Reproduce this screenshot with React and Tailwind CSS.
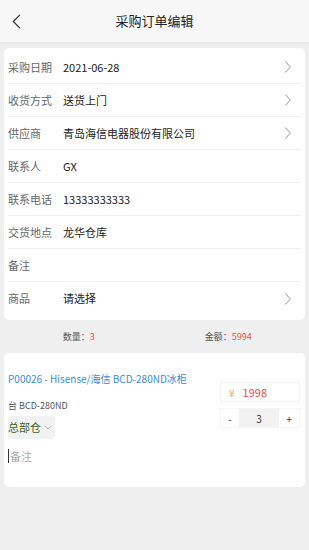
import React from 'react';

const rows = [
  { label: '采购日期', value: '2021-06-28', arrow: true },
  { label: '收货方式', value: '送货上门', arrow: true },
  { label: '供应商', value: '青岛海信电器股份有限公司', arrow: true },
  { label: '联系人', value: 'GX' },
  { label: '联系电话', value: '13333333333' },
  { label: '交货地点', value: '龙华仓库' },
  { label: '备注', value: '' },
  { label: '商品', value: '请选择', arrow: true },
];

function Chevron({ className = '' }) {
  return (
    <svg viewBox="0 0 10 16" className={className} fill="none" stroke="currentColor" strokeWidth="1" strokeLinecap="round" strokeLinejoin="round">
      <path d="M2 1.5 L8 8 L2 14.5" />
    </svg>
  );
}

export default function App() {
  return (
    <div
      className="w-[309px] h-[550px] bg-[#efefef] overflow-hidden text-[#333]"
      style={{ fontFamily: '"Noto Sans CJK SC", "Noto Sans", sans-serif' }}
    >
      {/* Header */}
      <div className="h-[42px] bg-[#f7f7f7] flex items-center relative shadow-[0_1px_3px_rgba(0,0,0,0.06)]">
        <svg viewBox="0 0 10 16" className="absolute left-[12px] w-[9px] h-[15px] text-[#333]" fill="none" stroke="currentColor" strokeWidth="1.3" strokeLinecap="round" strokeLinejoin="round">
          <path d="M8.5 1 L1.5 8 L8.5 15" />
        </svg>
        <div className="flex-1 text-center text-[13px] text-[#222]">采购订单编辑</div>
      </div>

      {/* Form card */}
      <div className="mx-[4px] mt-[6px] bg-white rounded-[5px] px-[4px] pt-[3px] pb-[5px]">
        {rows.map((r, i) => (
          <div
            key={r.label}
            className={`h-[33px] flex items-center ${i < rows.length - 1 ? 'border-b border-[#efefef]' : ''}`}
          >
            <div className="w-[55px] text-[11px] text-[#666]">{r.label}</div>
            <div className="flex-1 text-[11px] text-[#222]">{r.value}</div>
            {r.arrow && <Chevron className="w-[8px] h-[14px] text-[#777] mr-[9px]" />}
          </div>
        ))}
      </div>

      {/* Summary */}
      <div className="h-[33px] flex items-center text-[9px] text-[#555]">
        <div className="flex-1 text-center pl-[4px]">
          数量：<span className="text-[#e0533f]">3</span>
        </div>
        <div className="flex-1 text-center pr-[6px]">
          金额：<span className="text-[#e0533f]">5994</span>
        </div>
      </div>

      {/* Product card */}
      <div className="mx-[4px] bg-white rounded-[5px] h-[134px] px-[4px] pt-[18px] flex">
        <div className="flex-1">
          <div className="text-[10px] text-[#3c8dd0] leading-[16px]">P00026 - Hisense/海信 BCD-280ND冰柜</div>
          <div className="text-[9px] text-[#555] mt-[12px] leading-[14px]">台 BCD-280ND</div>
          <div className="mt-[3px] inline-flex items-center bg-[#f2f2f2] rounded-[3px] h-[23px] pr-[3px] text-[11px]">
            <span className="text-[#3f5f20]">总部仓</span>
            <svg viewBox="0 0 10 6" className="w-[8px] h-[5px] ml-[3px] text-[#999]" fill="none" stroke="currentColor" strokeWidth="0.9">
              <path d="M1 1 L5 5 L9 1" />
            </svg>
          </div>
          <div className="mt-[8px] flex items-center h-[18px] text-[11px] text-[#aaa]">
            <span className="w-px h-[14px] bg-[#333] mr-[1px]"></span>备注
          </div>
        </div>
        <div className="w-[80px] pt-[11px] mr-[1px]">
          <div className="h-[20px] border border-[#f3f3f3] flex items-center pl-[8px] text-[11px]">
            <span className="text-[#f0a83c] text-[10px]">¥</span>
            <span className="text-[#e0533f] ml-[8px]">1998</span>
          </div>
          <div className="h-[20px] mt-[6px] flex items-center border border-[#f5f5f5] text-[10px] text-[#333]">
            <div className="w-[18px] text-center">-</div>
            <div className="flex-1 h-full bg-[#f2f2f2] flex items-center justify-center">3</div>
            <div className="w-[20px] text-center">+</div>
          </div>
        </div>
      </div>
    </div>
  );
}
